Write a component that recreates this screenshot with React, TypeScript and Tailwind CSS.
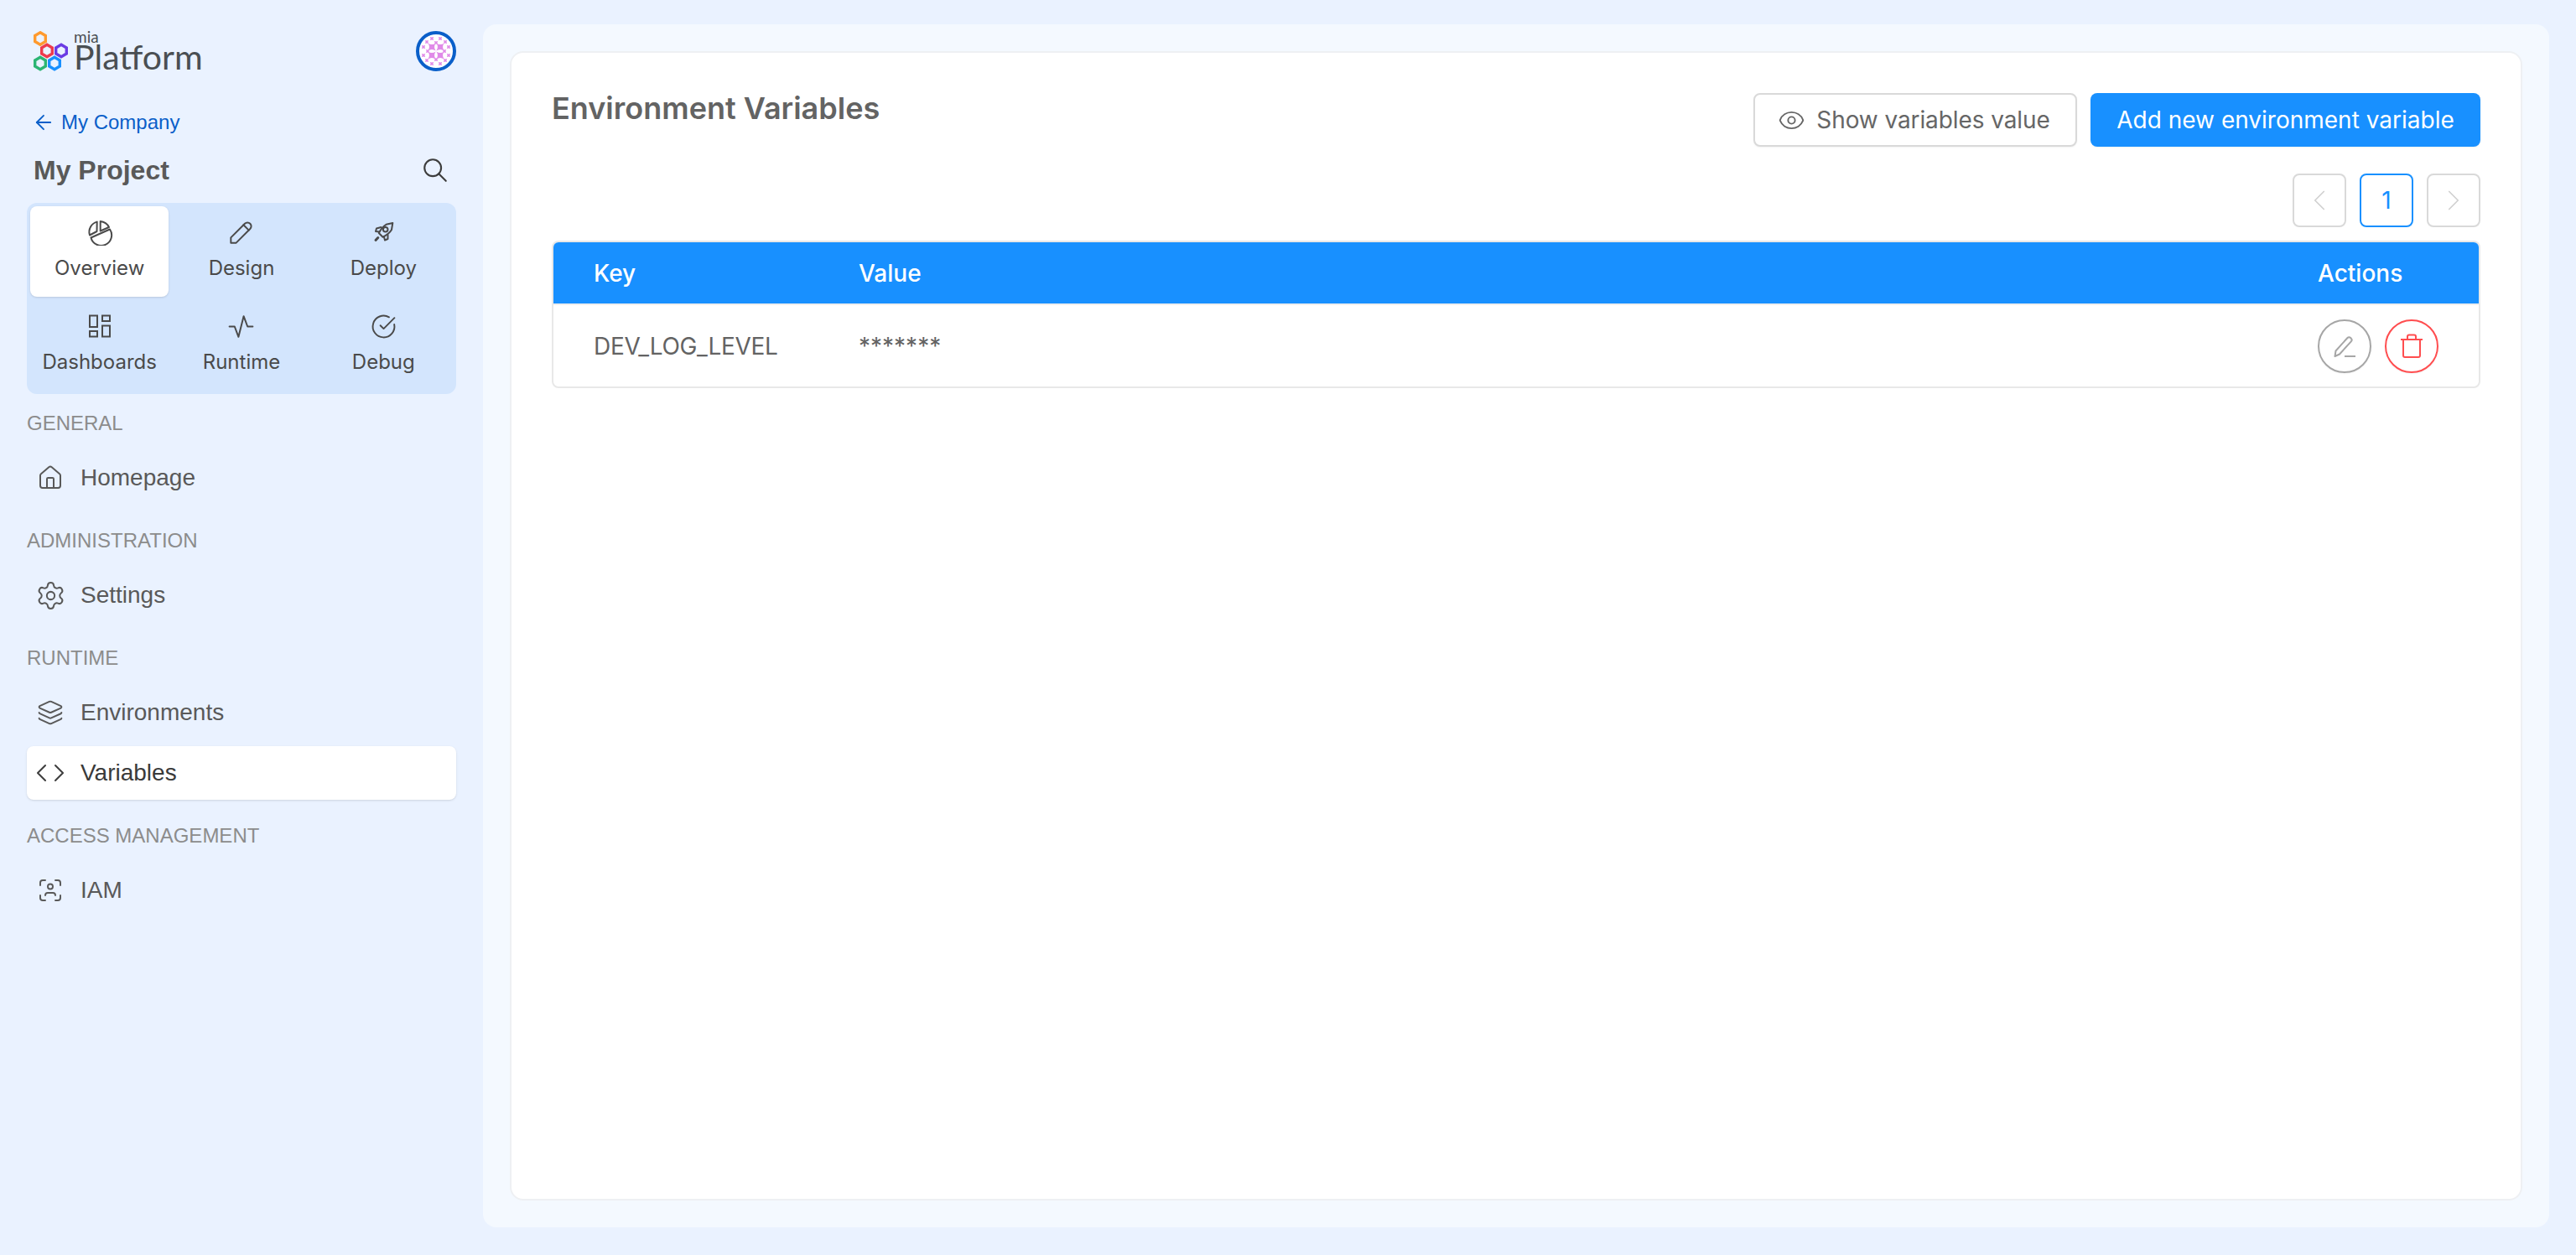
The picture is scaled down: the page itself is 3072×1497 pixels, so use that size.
import React from "react";
import { ArrowLeft, ChevronLeft, ChevronRight, CircleCheckBig, Code, Eye, House, Layers, Settings } from "lucide-react";
import { TbActivity, TbPencil, TbSearch, TbUserScan } from "react-icons/tb";

const sans = "font-['Liberation_Sans',Arial,sans-serif]";
const inter = "font-['Inter',sans-serif]";

function Hex({ cx, cy, color }: { cx: number; cy: number; color: string }) {
  const points = [
    [cx, cy - 7.2],
    [cx + 6.3, cy - 3.6],
    [cx + 6.3, cy + 3.6],
    [cx, cy + 7.2],
    [cx - 6.3, cy + 3.6],
    [cx - 6.3, cy - 3.6],
  ]
    .map((p) => p.join(","))
    .join(" ");
  return <polygon points={points} fill="none" stroke={color} strokeWidth="3.4" />;
}

function Logo() {
  return (
    <div className="flex items-center gap-[6px]">
      <svg width="42" height="48" viewBox="40 37 42 48" className="shrink-0">
        <Hex cx={48} cy={46} color="#ff9a2e" />
        <Hex cx={56} cy={60.5} color="#ee3a4c" />
        <Hex cx={73} cy={60.5} color="#6a3be4" />
        <Hex cx={48} cy={75.5} color="#2bb573" />
        <Hex cx={65} cy={75.5} color="#1890ff" />
      </svg>
      <div className="flex flex-col font-['Lato',sans-serif] text-[#4a4f53]">
        <span className="h-[14px] text-[19px] leading-[14px]">mia</span>
        <span className="h-[34px] text-[41px] leading-[34px]">Platform</span>
      </div>
    </div>
  );
}

const bigStars = [
  [19, 19],
  [29, 19],
  [19, 29],
  [29, 29],
];
const smallStars = [
  [9, 19],
  [9, 29],
  [39, 19],
  [39, 29],
  [19, 9],
  [29, 9],
  [19, 39],
  [29, 39],
  [13, 13],
  [35, 13],
  [13, 35],
  [35, 35],
  [24, 14],
  [24, 34],
  [14, 24],
  [34, 24],
];

function star(cx: number, cy: number, r: number) {
  return `M${cx - r} ${cy - r}Q${cx} ${cy - r / 3} ${cx + r} ${cy - r}Q${cx + r / 3} ${cy} ${cx + r} ${cy + r}Q${cx} ${cy + r / 3} ${cx - r} ${cy + r}Q${cx - r / 3} ${cy} ${cx - r} ${cy - r}Z`;
}

function Avatar() {
  return (
    <svg width="48" height="48" viewBox="0 0 48 48">
      <defs>
        <clipPath id="avatar-clip">
          <circle cx="24" cy="24" r="21" />
        </clipPath>
      </defs>
      <circle cx="24" cy="24" r="22" fill="#ffffff" />
      <g clipPath="url(#avatar-clip)" fill="#e08ae8">
        {bigStars.map(([x, y]) => (
          <path key={`b${x}-${y}`} d={star(x, y, 4.6)} />
        ))}
        {smallStars.map(([x, y]) => (
          <path key={`s${x}-${y}`} d={star(x, y, 2.2)} />
        ))}
      </g>
      <circle cx="24" cy="24" r="22" fill="none" stroke="#0a5fc9" strokeWidth="4" />
    </svg>
  );
}

function PieIcon() {
  return (
    <svg width="32" height="32" viewBox="0 0 32 32" fill="none" stroke="#4a4a4a" strokeWidth="2" strokeLinejoin="round">
      <path d="M12.7 3.6A12.5 12.5 0 0 0 4 19.5L12.5 15Z" />
      <path d="M16.7 3A13 13 0 0 1 27 10L16.7 14.5Z" />
      <path d="M28 12.5A12.5 12.5 0 1 1 5.5 22.5Z" />
    </svg>
  );
}

function RocketIcon() {
  return (
    <svg width="32" height="32" viewBox="0 0 32 32" fill="none" stroke="#4a4a4a" strokeWidth="2" strokeLinejoin="round" strokeLinecap="round">
      <path d="M27.3 5L19.5 6.8C16 9 13 12.5 10.8 17L15.5 21.8C20 19.5 24 16.5 26 13Z" />
      <path d="M13.5 10L8 11.5L7 15L11.2 15.5" />
      <path d="M21.5 19L21.5 24L18 25.5L16.8 21" />
      <circle cx="18.7" cy="12.8" r="2.8" />
      <path d="M7 25.5L9.8 22.5" strokeWidth="3" />
    </svg>
  );
}

function DashboardIcon() {
  return (
    <svg width="32" height="32" viewBox="0 0 32 32" fill="none" stroke="#4a4a4a" strokeWidth="2">
      <rect x="4" y="3.5" width="9" height="13.5" />
      <rect x="19" y="3.5" width="9" height="6.5" />
      <rect x="4" y="22" width="9" height="6.5" />
      <rect x="19" y="15.5" width="9" height="13" />
    </svg>
  );
}

const tabs = [
  { label: "Overview", icon: <PieIcon />, active: true },
  { label: "Design", icon: <TbPencil size={38} strokeWidth={1.25} color="#4a4a4a" /> },
  { label: "Deploy", icon: <RocketIcon /> },
  { label: "Dashboards", icon: <DashboardIcon /> },
  { label: "Runtime", icon: <TbActivity size={37} strokeWidth={1.3} color="#4a4a4a" /> },
  { label: "Debug", icon: <CircleCheckBig size={31} strokeWidth={1.5} color="#4a4a4a" /> },
];

const sections = [
  { title: "GENERAL", items: [{ label: "Homepage", icon: <House size={32} strokeWidth={1.5} color="#595959" /> }] },
  { title: "ADMINISTRATION", items: [{ label: "Settings", icon: <Settings size={37} strokeWidth={1.3} color="#595959" /> }] },
  {
    title: "RUNTIME",
    items: [
      { label: "Environments", icon: <Layers size={32} strokeWidth={1.5} color="#595959" /> },
      { label: "Variables", icon: <Code size={36} strokeWidth={1.4} color="#404040" />, active: true },
    ],
  },
  { title: "ACCESS MANAGEMENT", items: [{ label: "IAM", icon: <TbUserScan size={36} strokeWidth={1.3} color="#595959" /> }] },
];

function Sidebar() {
  return (
    <aside className={`flex w-[576px] shrink-0 flex-col px-[32px] pt-[37px] ${sans}`}>
      <div className="flex h-[48px] items-center justify-between pl-[8px]">
        <Logo />
        <Avatar />
      </div>
      <div className="mt-[45px] flex h-[32px] items-center gap-[7px] pl-[6px] text-[24px] text-[#0a5fc9]">
        <ArrowLeft size={28} strokeWidth={1.6} />
        <span>My Company</span>
      </div>
      <div className="mt-[21px] flex h-[40px] items-center justify-between pr-[8px] pl-[8px]">
        <span className="text-[32px] font-bold text-[#595959]">My Project</span>
        <TbSearch size={34} strokeWidth={1.5} color="#3d3d3d" />
      </div>
      <div className="mt-[19px] grid grid-cols-3 gap-[4px] rounded-[12px] bg-[#d3e5fd] p-[4px]">
        {tabs.map((tab) => (
          <div
            key={tab.label}
            className={`flex h-[108px] flex-col items-center justify-center gap-[8px] rounded-[8px] ${inter} text-[24px] leading-[32px] text-[#4a4a4a] ${
              tab.active ? "bg-white shadow-sm" : ""
            }`}
          >
            <div className="-mt-[3px] mb-[3px] flex h-[32px] items-center justify-center">{tab.icon}</div>
            <span>{tab.label}</span>
          </div>
        ))}
      </div>
      <div className="mt-[15px] flex flex-col gap-[23px]">
        {sections.map((section) => (
          <div key={section.title}>
            <div className="h-[40px] text-[24px] leading-[40px] text-[#8c8c8c]">{section.title}</div>
            <div className="mt-[13px] flex flex-col gap-[8px]">
              {section.items.map((item) => (
                <div
                  key={item.label}
                  className={`flex h-[64px] items-center gap-[8px] rounded-[8px] text-[28px] ${
                    item.active ? "bg-white text-[#3a3a3a] shadow-sm" : "text-[#595959]"
                  }`}
                >
                  <div className="flex w-[56px] shrink-0 items-center justify-center">{item.icon}</div>
                  <span>{item.label}</span>
                </div>
              ))}
            </div>
          </div>
        ))}
      </div>
    </aside>
  );
}

function EditIcon() {
  return (
    <svg width="28" height="28" viewBox="0 0 28 28" fill="none" stroke="#a6a6a6" strokeWidth="2" strokeLinejoin="round">
      <path d="M2.5 26l1-6.5L17.5 4a2.6 2.6 0 0 1 3.7 0l.6.7a2.6 2.6 0 0 1 0 3.6L8 23.5Z" />
      <path d="M14 26h13" />
    </svg>
  );
}

function TrashIcon() {
  return (
    <svg width="28" height="30" viewBox="0 0 28 30" fill="none" stroke="#ff4d4f" strokeWidth="2" strokeLinejoin="round">
      <path d="M1 7h26" />
      <path d="M9 7V3.5A2 2 0 0 1 11 1.5h6a2 2 0 0 1 2 2V7" />
      <path d="M4 7v19a2 2 0 0 0 2 2h16a2 2 0 0 0 2-2V7" />
    </svg>
  );
}

function PageButton({ children, current }: { children: React.ReactNode; current?: boolean }) {
  return (
    <div
      className={`flex h-[64px] w-[64px] items-center justify-center rounded-[8px] border-2 bg-white ${
        current ? "border-[#1890ff] text-[#1890ff]" : "border-[#d9d9d9] text-[#d0d0d0]"
      }`}
    >
      {children}
    </div>
  );
}

function VariablesCard() {
  return (
    <div className={`flex-1 rounded-[16px] border-2 border-[#eef0f3] bg-white p-[48px] ${inter}`}>
      <div className="flex items-start justify-between">
        <h1 className="text-[36px] leading-[36px] font-semibold text-[#636363]">Environment Variables</h1>
        <div className="flex gap-[16px] text-[28px]">
          <button className="flex h-[64px] w-[386px] items-center justify-center gap-[13px] rounded-[8px] border-2 border-[#d9d9d9] bg-white pr-[3px] text-[#666666] shadow-xs">
            <Eye size={33} strokeWidth={1.4} />
            <span className="tracking-[-0.1px]">Show variables value</span>
          </button>
          <button className="flex h-[64px] w-[465px] items-center justify-center rounded-[8px] bg-[#1890ff] text-white shadow-xs">
            Add new environment variable
          </button>
        </div>
      </div>
      <div className="mt-[32px] flex justify-end gap-[16px]">
        <PageButton>
          <ChevronLeft size={42} strokeWidth={1} />
        </PageButton>
        <PageButton current>
          <span className="text-[28px]">1</span>
        </PageButton>
        <PageButton>
          <ChevronRight size={42} strokeWidth={1} />
        </PageButton>
      </div>
      <div className="mt-[16px] overflow-hidden rounded-[8px] border-2 border-[#e8e8e8] text-[28px]">
        <div className="grid h-[73px] grid-cols-[316px_1fr_239px] items-center bg-[#1890ff] font-medium text-white">
          <div className="pl-[48px]">Key</div>
          <div className="pl-[48px]">Value</div>
          <div className="pl-[47px]">Actions</div>
        </div>
        <div className="grid h-[99px] grid-cols-[316px_1fr_239px] items-center border-t-2 border-[#eeeeee] text-[#636363]">
          <div className="pl-[48px] tracking-[-0.3px]">DEV_LOG_LEVEL</div>
          <div className="pl-[48px]">*******</div>
          <div className="flex gap-[16px] pl-[47px]">
            <div className="flex h-[64px] w-[64px] items-center justify-center rounded-full border-2 border-[#a6a6a6] shadow-xs">
              <EditIcon />
            </div>
            <div className="flex h-[64px] w-[64px] items-center justify-center rounded-full border-2 border-[#ff4d4f] shadow-xs">
              <TrashIcon />
            </div>
          </div>
        </div>
      </div>
    </div>
  );
}

export default function App() {
  return (
    <div className="flex h-[1497px] w-full overflow-hidden bg-[#eaf2ff]">
      <Sidebar />
      <main className="mt-[29px] mr-[32px] mb-[33px] flex flex-1 rounded-[16px] bg-[#f4f9ff] p-[32px]">
        <VariablesCard />
      </main>
    </div>
  );
}
